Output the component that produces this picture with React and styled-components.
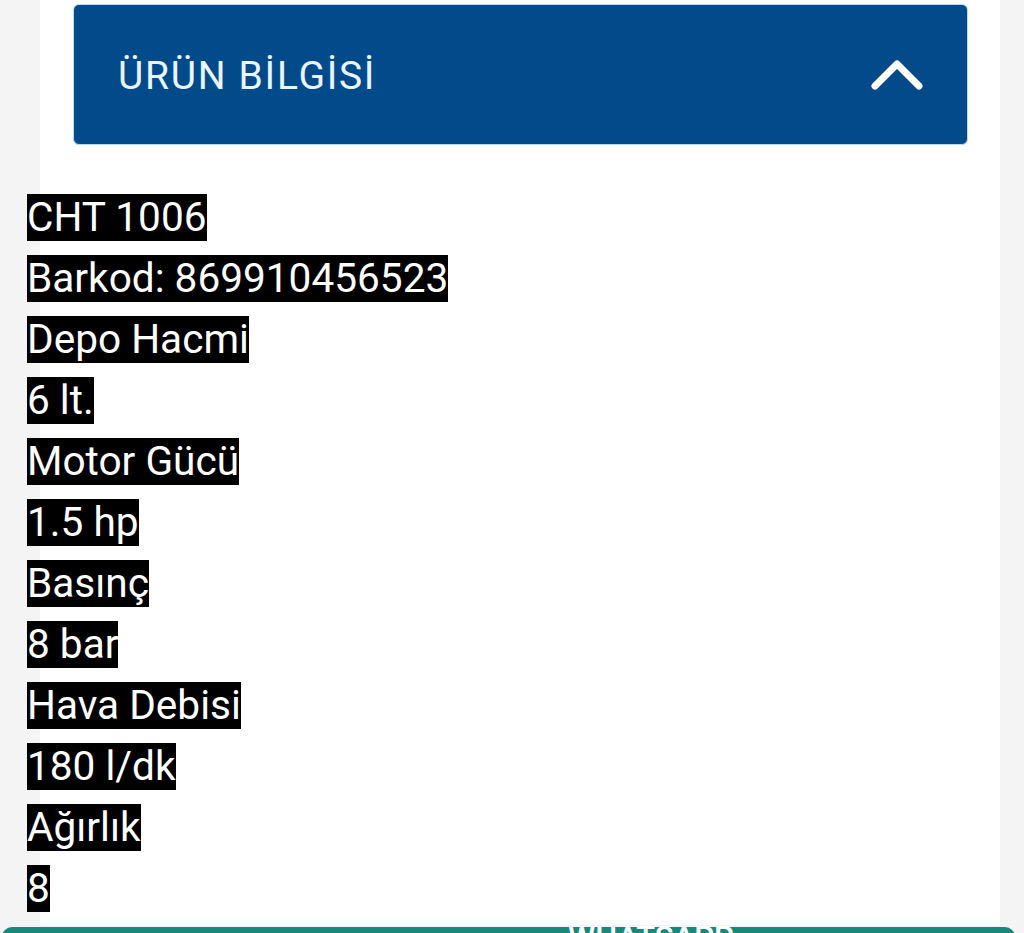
import React from 'react';
import styled, { createGlobalStyle } from 'styled-components';

const GlobalStyle = createGlobalStyle`
  html, body {
    margin: 0;
    padding: 0;
    background: #f4f4f5;
    overflow: hidden;
  }
  body {
    font-family: Roboto, "Noto Sans", "Liberation Sans", sans-serif;
  }
`;

const specs = [
  'CHT 1006',
  'Barkod: 869910456523',
  'Depo Hacmi',
  '6 lt.',
  'Motor Gücü',
  '1.5 hp',
  'Basınç',
  '8 bar',
  'Hava Debisi',
  '180 l/dk',
  'Ağırlık',
  '8',
];

export default function App() {
  return (
    <Page>
      <GlobalStyle />
      <Card>
        <AccordionHead>
          <HeadTitle>ÜRÜN BİLGİSİ</HeadTitle>
          <Chevron viewBox="0 0 56 34" aria-hidden="true">
            <path d="M6 28 L28 6 L50 28" />
          </Chevron>
        </AccordionHead>
        <SpecList>
          {specs.map((line, i) => (
            <SpecLine key={i}>
              <Marked>{line}</Marked>
            </SpecLine>
          ))}
        </SpecList>
      </Card>
      <OrderBar>
        <OrderLabel>WHATSAPP</OrderLabel>
      </OrderBar>
    </Page>
  );
}

const Page = styled('div')`
  width: 1024px;
  height: 933px;
  display: flex;
  flex-direction: column;
  background: #f4f4f5;
  overflow: hidden;
`;

const Card = styled('div')`
  margin: 0 24px 0 40px;
  padding: 4px 32px 0 33px;
  background: #ffffff;
  display: flex;
  flex-direction: column;
  height: 921px;
  flex-shrink: 0;
`;

const AccordionHead = styled('div')`
  flex-shrink: 0;
  height: 141px;
  box-sizing: border-box;
  display: flex;
  align-items: center;
  justify-content: space-between;
  padding: 0 42px 0 44px;
  background: #034a8b;
  border: 1px solid #b9daf3;
  border-radius: 6px;
`;

const HeadTitle = styled('span')`
  color: #e9f5ff;
  font-family: Roboto, "Noto Sans", sans-serif;
  font-size: 39px;
  letter-spacing: 1.7px;
  padding-top: 2px;
`;

const Chevron = styled('svg')`
  width: 56px;
  height: 34px;
  fill: none;
  stroke: #ffffff;
  stroke-width: 7;
  stroke-linecap: round;
  stroke-linejoin: round;
`;

const SpecList = styled('div')`
  margin: 39px 0 0 -46px;
  display: flex;
  flex-direction: column;
  flex-shrink: 0;
`;

const SpecLine = styled('div')`
  height: 61px;
  line-height: 61px;
  font-size: 40.6px;
  white-space: nowrap;
`;

const Marked = styled('span')`
  display: inline-block;
  line-height: 47px;
  background: #000000;
  color: #ffffff;
  font-family: Roboto, "Noto Sans", sans-serif;
  vertical-align: middle;
`;

const OrderBar = styled('div')`
  margin: 2px 9px 0 2px;
  height: 40px;
  flex-shrink: 0;
  background: #17897a;
  border-radius: 10px 10px 0 0;
  display: flex;
  align-items: flex-start;
  padding-left: 566px;
`;

const OrderLabel = styled('span')`
  color: #ffffff;
  font-family: Roboto, "Noto Sans", sans-serif;
  font-weight: 500;
  font-size: 31px;
  line-height: 36px;
  margin-top: -7px;
`;
